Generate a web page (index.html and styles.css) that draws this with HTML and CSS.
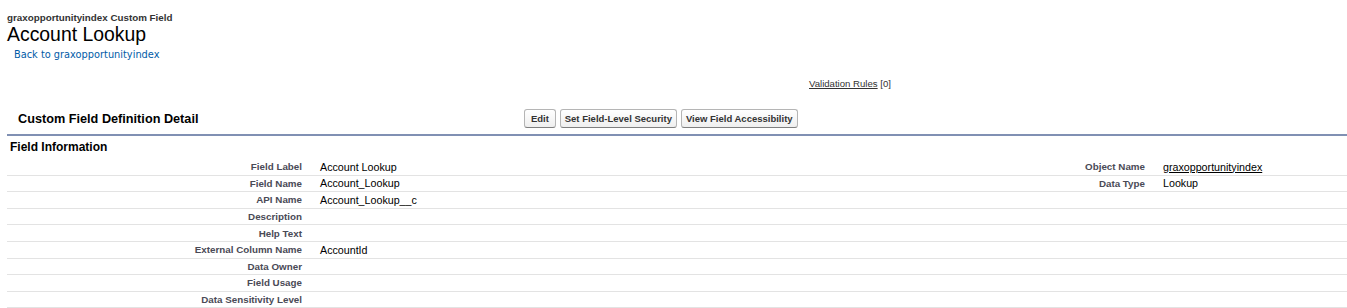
FILE: index.html
```html
<!DOCTYPE html>
<html lang="en">
<head>
    <meta charset="UTF-8">
    <title>Account Lookup ~ Custom Field</title>
    <link rel="stylesheet" href="styles.css">
</head>
<body>
    <div class="page">
        <div class="page-title">
            <div class="page-type">graxopportunityindex Custom Field</div>
            <h1 class="page-desc">Account Lookup</h1>
            <div class="breadcrumb"><a href="#">Back to graxopportunityindex</a></div>
        </div>

        <div class="hover-links">
            <a href="#">Validation Rules</a> <span class="count">[0]</span>
        </div>

        <div class="block">
            <div class="block-header">
                <h2 class="block-title">Custom Field Definition Detail</h2>
                <div class="buttons">
                    <button class="btn">&thinsp;Edit&thinsp;</button>
                    <button class="btn">Set Field-Level Security</button>
                    <button class="btn">View Field Accessibility</button>
                </div>
            </div>

            <h3 class="section-title">Field Information</h3>
            <table class="detail">
                <colgroup>
                    <col class="c-label">
                    <col class="c-data">
                    <col class="c-label2">
                    <col>
                </colgroup>
                <tr>
                    <td class="label">Field Label</td>
                    <td class="data">Account Lookup</td>
                    <td class="label">Object Name</td>
                    <td class="data"><a href="#">graxopportunityindex</a></td>
                </tr>
                <tr>
                    <td class="label">Field Name</td>
                    <td class="data">Account_Lookup</td>
                    <td class="label">Data Type</td>
                    <td class="data">Lookup</td>
                </tr>
                <tr>
                    <td class="label">API Name</td>
                    <td class="data">Account_Lookup__c</td>
                    <td class="label"></td>
                    <td class="data"></td>
                </tr>
                <tr>
                    <td class="label">Description</td>
                    <td class="data"></td>
                    <td class="label"></td>
                    <td class="data"></td>
                </tr>
                <tr>
                    <td class="label">Help Text</td>
                    <td class="data"></td>
                    <td class="label"></td>
                    <td class="data"></td>
                </tr>
                <tr>
                    <td class="label">External Column Name</td>
                    <td class="data">AccountId</td>
                    <td class="label"></td>
                    <td class="data"></td>
                </tr>
                <tr>
                    <td class="label">Data Owner</td>
                    <td class="data"></td>
                    <td class="label"></td>
                    <td class="data"></td>
                </tr>
                <tr>
                    <td class="label">Field Usage</td>
                    <td class="data"></td>
                    <td class="label"></td>
                    <td class="data"></td>
                </tr>
                <tr>
                    <td class="label">Data Sensitivity Level</td>
                    <td class="data"></td>
                    <td class="label"></td>
                    <td class="data"></td>
                </tr>
            </table>
        </div>
    </div>
</body>
</html>
```

FILE: styles.css
```css
body {
    margin: 0;
    font-family: "Liberation Sans", Arial, sans-serif;
    color: #000;
    background: #fff;
}
.page {
    padding: 12px 0 0 7px;
}
.page-type {
    font-size: 9.8px;
    font-weight: bold;
    color: #333;
    line-height: 12px;
}
.page-desc {
    margin: 0;
    font-size: 19.4px;
    font-weight: normal;
    line-height: 20px;
}
.breadcrumb {
    padding: 5px 0 0 7px;
    font-family: "DejaVu Sans", Verdana, sans-serif;
    font-size: 9.8px;
    line-height: 12px;
}
.breadcrumb a {
    color: #015ba7;
    text-decoration: none;
}
.hover-links {
    margin: 17px 0 0 802px;
    font-size: 9.6px;
    line-height: 12px;
    color: #333;
}
.hover-links a {
    color: #333;
}
.block-header {
    display: flex;
    align-items: center;
    height: 31px;
    margin-top: 13px;
    border-bottom: 2px solid #8090b3;
}
.block-title {
    margin: 0;
    width: 506px;
    padding-left: 11px;
    font-size: 12.7px;
    font-weight: bold;
}
.buttons {
    display: flex;
    gap: 4px;
}
.btn {
    font-family: "Liberation Sans", Arial, sans-serif;
    font-size: 9.5px;
    font-weight: bold;
    color: #333;
    padding: 0 4px;
    height: 19px;
    border: 1px solid #b5b5b5;
    border-bottom-color: #7f7f7f;
    border-radius: 3px;
    background: linear-gradient(#ffffff, #efefef);
}
.section-title {
    margin: 0;
    padding: 5px 0 0 3px;
    font-size: 12px;
    font-weight: bold;
    line-height: 13px;
}
.detail {
    width: 100%;
    border-collapse: collapse;
    table-layout: fixed;
    margin-top: 5px;
}
.c-label { width: 303px; }
.c-data { width: 663px; }
.c-label2 { width: 180px; }
.detail td {
    height: 15.6px;
    padding: 0;
    border-bottom: 1px solid #e3e3e3;
    vertical-align: middle;
}
.label {
    text-align: right;
    padding-right: 8px !important;
    font-size: 9.8px;
    font-weight: bold;
    color: #4a4a56;
}
.data {
    padding-left: 10px !important;
    font-size: 10.7px;
}
.data a {
    color: #000;
}
```
